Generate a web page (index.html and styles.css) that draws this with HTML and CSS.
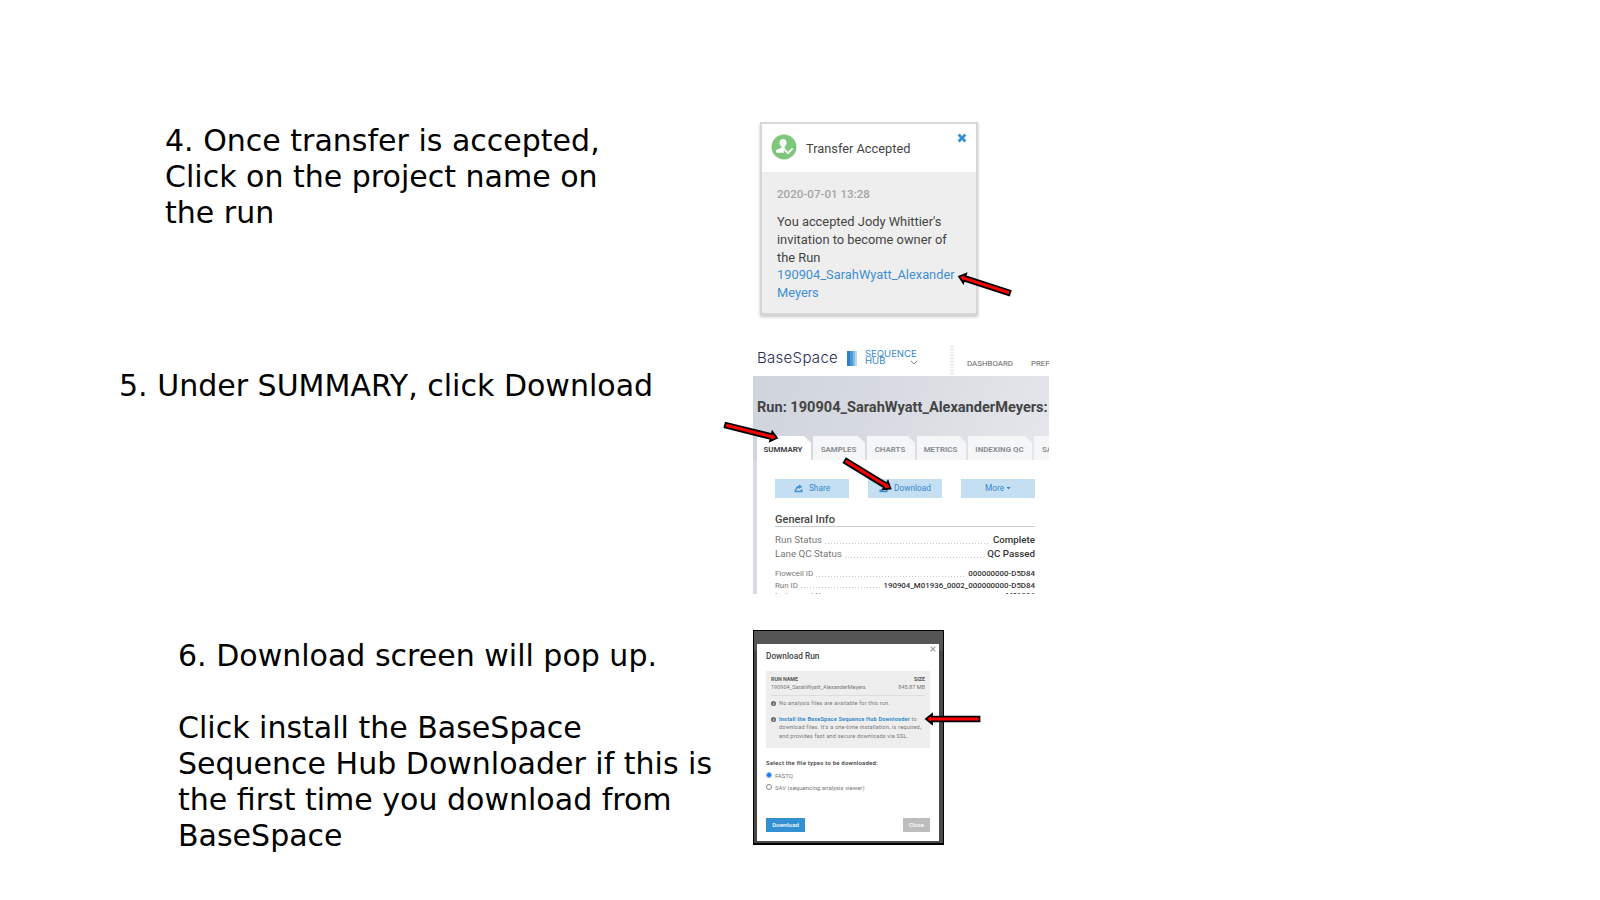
FILE: index.html
```html
<!DOCTYPE html>
<html lang="en">
<head>
<meta charset="utf-8">
<title>Download from BaseSpace</title>
<link rel="stylesheet" href="styles.css">
</head>
<body>
<main class="slide">
  <section class="step step-4">
    <p class="copy">4. Once transfer is accepted,<br>Click on the project name on<br>the run</p>
    <article class="notice">
      <header class="notice-head">
        <svg class="avatar" viewBox="0 0 26 26"><circle cx="13" cy="13" r="12.5" fill="#7fc67c"/><path d="M12 5c2.200 0 3.500 1.600 3.500 3.800 0 1.700-.8 3.200-1.900 3.900v1.600l2.400 1.200v3.300H6.400c-1 0-1.400-.5-1.400-1.200 0-1.500 1-2.100 5.400-3.500v-1.400c-1.100-.7-1.900-2.200-1.900-3.900C8.500 6.600 9.800 5 12 5z" fill="#fff"/><path d="M14 16.200l3 3.100 5-5.300" fill="none" stroke="#7fc67c" stroke-width="4.600"/><path d="M14.200 16.300l2.800 2.900 4.600-4.800" fill="none" stroke="#fff" stroke-width="1.900"/></svg>
        <span class="notice-title">Transfer Accepted</span>
        <svg class="notice-close" viewBox="0 0 10 10"><path d="M1.600 1.600l6.800 6.800M8.400 1.600L1.600 8.400" stroke="#3390d2" stroke-width="2.800"/></svg>
      </header>
      <div class="notice-body">
        <time class="notice-time">2020-07-01 13:28</time>
        <p class="notice-text">You accepted Jody Whittier's<br>invitation to become owner of<br>the Run<br><a>190904_SarahWyatt_Alexander<br>Meyers</a></p>
      </div>
    </article>
  </section>

  <section class="step step-5">
    <p class="copy">5. Under SUMMARY, click Download</p>
    <div class="hub">
      <header class="hub-bar">
        <span class="brand">BaseSpace</span>
        <i class="brand-mark"></i>
        <span class="brand-sub">SEQUENCE<br>HUB<svg class="chevron" viewBox="0 0 8 5"><path d="M.8.800L4 4 7.200.800" fill="none" stroke="#777" stroke-width=".9"/></svg></span>
        <i class="divider"></i>
        <nav class="nav"><span>DASHBOARD</span><span>PREP</span></nav>
      </header>
      <div class="hub-title">
        <h1>Run: 190904_SarahWyatt_AlexanderMeyers:</h1>
        <div class="tabs">
          <span class="tab active w-summary">SUMMARY</span><span class="tab w-samples">SAMPLES</span><span class="tab w-charts">CHARTS</span><span class="tab w-metrics">METRICS</span><span class="tab w-index">INDEXING QC</span><span class="tab w-sav">SAV</span>
        </div>
      </div>
      <div class="hub-body">
        <div class="buttons">
          <span class="btn"><svg class="share" viewBox="0 0 10 10"><path d="M.5 6h2v1.500h5V6h2v3.300h-9z" fill="#3c92d2"/><path d="M2.600 6.300C2.800 4 4 2.900 6 2.900" fill="none" stroke="#3c92d2" stroke-width="1.700"/><path d="M5.500.5L9.300 3 5.500 5.600z" fill="#3c92d2"/></svg>Share</span>
          <span class="btn"><svg class="share" viewBox="0 0 10 10"><path d="M.5 6h2v1.500h5V6h2v3.300h-9z" fill="#3c92d2"/><path d="M5 1v5" stroke="#3c92d2" stroke-width="1.600"/></svg>Download</span>
          <span class="btn">More<i class="caret"></i></span>
        </div>
        <h2>General Info</h2>
        <dl class="facts large">
          <div><dt>Run Status</dt><i></i><dd>Complete</dd></div>
          <div><dt>Lane QC Status</dt><i></i><dd>QC Passed</dd></div>
        </dl>
        <dl class="facts small">
          <div><dt>Flowcell ID</dt><i></i><dd>000000000-D5D84</dd></div>
          <div><dt>Run ID</dt><i></i><dd>190904_M01936_0002_000000000-D5D84</dd></div>
          <div class="cut"><dt>Instrument Name</dt><i></i><dd>M01936</dd></div>
        </dl>
      </div>
    </div>
  </section>

  <section class="step step-6">
    <p class="copy">6. Download screen will pop up.<br><br>Click install the BaseSpace<br>Sequence Hub Downloader if this is<br>the first time you download from<br>BaseSpace</p>
    <div class="backdrop">
      <div class="modal">
        <svg class="modal-close" viewBox="0 0 6 6"><path d="M.7.700l4.600 4.600M5.300.700L.7 5.300" stroke="#999" stroke-width="1.200"/></svg>
        <h3>Download Run</h3>
        <div class="panel">
          <div class="pair head"><b>RUN NAME</b><b>SIZE</b></div>
          <div class="pair values"><span>190904_SarahWyatt_AlexanderMeyers</span><span>845.87 MB</span></div>
          <div class="hint first"><i class="info">i</i><span>No analysis files are available for this run.</span></div>
          <div class="hint"><i class="info">i</i><span><a>Install the BaseSpace Sequence Hub Downloader</a> to<br>download files. It's a one-time installation, is required,<br>and provides fast and secure downloads via SSL.</span></div>
        </div>
        <p class="question">Select the file types to be downloaded:</p>
        <div class="option"><i class="radio on"></i>FASTQ</div>
        <div class="option"><i class="radio"></i>SAV (sequencing analysis viewer)</div>
        <footer class="modal-foot"><span class="go">Download</span><span class="shut">Close</span></footer>
      </div>
    </div>
  </section>

  <svg class="arrows" viewBox="0 0 1600 900">
    <defs><path id="arrow" d="M0 0L6-4.800V-2.400H53.500V2.400H6V4.800z" fill="#f00" stroke="#000" stroke-width="1.800"/></defs>
    <use href="#arrow" transform="translate(959 276.500) rotate(18)"/>
    <use href="#arrow" transform="translate(777 438) rotate(194)"/>
    <use href="#arrow" transform="translate(890.500 488.500) rotate(211.500)"/>
    <use href="#arrow" transform="translate(926 719)"/>
  </svg>
</main>
</body>
</html>
```

FILE: styles.css
```css
* { box-sizing: border-box; }
body { margin: 0; background: #fff; font-family: Roboto, "Liberation Sans", sans-serif; }
h1, h2, h3, p, dl, dt, dd { margin: 0; }
i { font-style: normal; flex: none; }
svg { flex: none; display: block; }
.slide { position: relative; width: 1600px; height: 900px; overflow: hidden; display: grid; grid-template-rows: 346px 284px 270px; }
.step { display: flex; align-items: flex-start; white-space: nowrap; }
.copy { width: 753px; flex: none; font: 30.030px/36px "DejaVu Sans", sans-serif; color: #000; }
.step-4 .copy { padding: 123px 0 0 165px; }
.step-5 .copy { padding: 22px 0 0 119px; }
.step-6 .copy { padding: 8px 0 0 178px; }
.arrows { position: absolute; left: 0; top: 0; width: 1600px; height: 900px; }

/* transfer notification */
.notice { margin: 122px 0 0 7px; width: 218px; height: 193px; border: 2px solid #d6d6d6; background: #eee; box-shadow: 0 2px 3px rgba(0,0,0,.22); color: #444; }
.notice-head { height: 48px; background: #fff; display: flex; padding: 0 9px 0 9px; }
.avatar { width: 26px; height: 26px; margin-top: 10px; }
.notice-title { margin-left: 9px; font-size: 12.8px; line-height: 48px; flex: 1; padding-top: 1px; }
.notice-close { width: 10px; height: 10px; margin-top: 9px; }
.notice-body { padding: 14px 0 0 15px; }
.notice-time { display: block; font-size: 11.600px; line-height: 17px; font-weight: 500; color: #a5a5a5; }
.notice-text { margin-top: 10px; font-size: 12.85px; line-height: 17.750px; }
.notice-text a { color: #408fd4; }

/* run page */
.hub { width: 296px; height: 248px; overflow: hidden; }
.hub-bar { height: 30px; display: flex; padding-left: 4px; }
.hub-bar > * { flex: none; }
.brand { width: 90px; font: 300 15px/20px Inter, sans-serif; color: #252c55; letter-spacing: .3px; padding-top: 2px; }
.brand-mark { width: 10px; height: 15px; margin-top: 5px; background: linear-gradient(90deg, #2f7fc6 0 3px, #4b9bd9 3px 6px, #84bbe5 6px 8px, #b9d9f0 8px); }
.brand-sub { margin: 4px 0 0 8px; width: 85px; font: 400 9.500px/7.300px Inter, sans-serif; color: #3388cf; position: relative; }
.chevron { position: absolute; left: 45px; top: 10px; width: 8px; height: 5px; }
.divider { width: 4px; height: 29px; background: repeating-linear-gradient(#e7e7e7 0 1px, #fafafa 1px 3px); }
.nav { display: flex; gap: 18px; margin-left: 13px; padding-top: 13px; font-size: 7.900px; line-height: 10px; color: #666; }
.hub-title { height: 84px; background: linear-gradient(110deg, #cfd4dd, #d9dce2 50%, #e5e7eb); padding: 0 0 0 4px; display: flex; flex-direction: column; justify-content: space-between; }
.hub-title h1 { font-size: 14.570px; line-height: 20px; font-weight: 700; color: #444; padding-top: 21px; }
.tabs { display: flex; gap: 2px; height: 24px; }
.tab { flex: none; font-size: 7.900px; line-height: 27px; font-weight: 700; color: #8b8e92; background: #f5f6f8; text-align: center; clip-path: polygon(0 0, calc(100% - 7px) 0, 100% 7px, 100% 100%, 0 100%); }
.tab.active { background: #fff; color: #444; }
.w-summary { width: 54px; padding-right: 8.500px; text-align: right; }
.w-samples { width: 52px; padding-right: 1px; } .w-charts { width: 48px; padding-right: 2px; } .w-metrics { width: 49px; padding-right: 2px; } .w-index { width: 64px; padding-right: 1px; } .w-sav { width: 60px; text-align: left; padding-left: 8px; }
.hub-body { border-left: 4px solid #d8dbe3; height: 134px; padding: 19px 14px 0 18px; color: #444; }
.buttons { display: grid; grid-template-columns: repeat(3, 74px); justify-content: space-between; }
.btn { height: 19px; display: flex; align-items: center; justify-content: center; gap: 6px; background: #c5dff2; color: #3788ca; font-size: 8.300px; line-height: 10px; padding-bottom: 1px; }
.share { width: 9px; height: 9px; }
.caret { width: 5px; height: 3px; background: #3788ca; clip-path: polygon(0 0, 100% 0, 50% 100%); margin-left: -4px; }
.hub-body h2 { margin-top: 13px; font-size: 11px; line-height: 17px; font-weight: 500; border-bottom: 1px solid #ccc; height: 16px; }
.facts > div { display: flex; align-items: flex-end; }
.facts dt { color: #777; }
.facts dd { color: #333; font-weight: 500; }
.facts i { flex: 1; height: 1px; margin: 0 3px 3px; background: repeating-linear-gradient(90deg, #c8c8c8 0 1px, #fff 1px 3px); }
.large { margin-top: 6px; font-size: 9.750px; line-height: 14px; }
.small { margin-top: 7px; font-size: 7.900px; line-height: 11.700px; }
.small .cut { margin-top: -1px; }

/* download dialog */
.backdrop { width: 191px; height: 215px; border: 1px solid #000; border-bottom-width: 2px; background: linear-gradient(#555 0 20px, #484848 20px); padding: 13px 4px 0 3px; }
.modal { position: relative; height: 197px; background: #fff; padding: 7px 9px 0 9px; color: #777; font-size: 5.550px; }
.modal-close { position: absolute; right: 3px; top: 2px; width: 6px; height: 6px; }
.modal h3 { font-size: 8.300px; line-height: 11px; font-weight: 500; color: #444; }
.panel { margin-top: 9px; height: 77px; background: #eee; padding: 4px 5px 0 5px; }
.pair { display: flex; justify-content: space-between; line-height: 8px; }
.head b { font-weight: 700; color: #555; }
.head { font-size: 5.300px; }
.values { border-bottom: 1px solid #ddd; height: 13px; }
.hint { display: flex; gap: 3px; line-height: 8.700px; margin-top: 7px; letter-spacing: .19px; }
.hint.first { margin-top: 3px; }
.hint a { color: #318acb; font-weight: 700; }
.info { width: 5px; height: 5px; margin-top: 2px; border-radius: 50%; background: #666; color: #fff; font: 700 4px/5px Roboto, sans-serif; text-align: center; letter-spacing: 0; }
.question { margin-top: 11px; font-size: 6px; line-height: 8px; letter-spacing: .2px; font-weight: 700; color: #555; }
.option { display: flex; align-items: center; gap: 3px; height: 8px; margin-top: 4px; font-size: 6px; }
.option + .option { margin-top: 4px; }
.radio { width: 6px; height: 6px; border-radius: 50%; border: 1px solid #888; }
.radio.on { border-color: #8fbdf5; background: #1b76e8; }
.modal-foot { display: flex; justify-content: space-between; margin-top: 27px; font-size: 6px; line-height: 14px; text-align: center; font-weight: 500; color: #fff; }
.go { width: 39px; background: #3390d2; }
.shut { width: 27px; background: #bdbdbd; }
```
